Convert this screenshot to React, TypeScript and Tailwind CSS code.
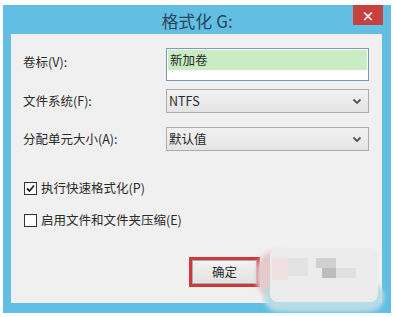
import React from "react";

const font = { fontFamily: '"Noto Sans CJK SC", "Noto Sans", sans-serif' };

function Chevron() {
  return (
    <svg width="10" height="7" viewBox="0 0 10 7" className="mr-[6px]">
      <path d="M1.5 1.5 L5 5 L8.5 1.5" fill="none" stroke="#555" strokeWidth="1.8" />
    </svg>
  );
}

export default function App() {
  return (
    <div className="w-[395px] h-[317px] bg-white overflow-hidden" style={font}>
      <div className="ml-[3px] mt-[5px] w-[388px] h-[308px] bg-[#62bfe3] flex flex-col relative">
        {/* title bar */}
        <div className="h-[29px] flex items-center justify-center relative">
          <span className="text-[17px] text-[#26465a] leading-none mt-[1px]">格式化 G:</span>
          <div className="absolute right-[8px] top-0 w-[30px] h-[20px] bg-[#c7413f] flex items-center justify-center">
            <span className="text-white text-[13px] font-bold leading-none">×</span>
          </div>
        </div>
        {/* content panel */}
        <div className="ml-[8px] w-[371px] h-[269px] bg-[#f0f0f0] relative text-[12.5px] text-[#2a2a2a] leading-[14px]">
          <div className="flex flex-col pt-[14px] pl-[12px]">
            <div className="flex items-start">
              <span className="w-[143px] mt-[7px]">卷标(V):</span>
              <div className="w-[203px] h-[33px] border border-[#7c9ab4] bg-white flex flex-col">
                <div className="h-[20px] bg-[#c9ecc2] m-[1px] mb-0 flex items-center pl-[2px]">新加卷</div>
              </div>
            </div>
            <div className="flex items-center mt-[8px]">
              <span className="w-[143px]">文件系统(F):</span>
              <div className="w-[203px] h-[24px] border border-[#acacac] bg-gradient-to-b from-[#f2f2f2] to-[#e4e4e4] flex items-center justify-between pl-[2px]">
                <span>NTFS</span>
                <Chevron />
              </div>
            </div>
            <div className="flex items-center mt-[14px]">
              <span className="w-[143px]">分配单元大小(A):</span>
              <div className="w-[203px] h-[24px] border border-[#acacac] bg-gradient-to-b from-[#f2f2f2] to-[#e4e4e4] flex items-center justify-between pl-[2px]">
                <span>默认值</span>
                <Chevron />
              </div>
            </div>
            <div className="flex items-center h-[20px] mt-[27px] pl-[1px]">
              <div className="w-[13px] h-[13px] border border-[#333] bg-white flex items-center justify-center mr-[4px]">
                <svg width="11" height="11" viewBox="0 0 11 11">
                  <path d="M2 5.5 L4.5 8 L9 2.5" fill="none" stroke="#222" strokeWidth="1.8" />
                </svg>
              </div>
              <span>执行快速格式化(P)</span>
            </div>
            <div className="flex items-center h-[20px] mt-[12px] pl-[1px]">
              <div className="w-[13px] h-[13px] border border-[#333] bg-white mr-[4px]" />
              <span>启用文件和文件夹压缩(E)</span>
            </div>
          </div>
          {/* OK button with red annotation */}
          <div className="absolute left-[178px] top-[223px] w-[71px] h-[30px] border-[3px] border-[#d2363a] flex">
            <div className="flex-1 border border-[#adadad] bg-gradient-to-b from-[#f2f2f2] to-[#e2e2e2] flex items-center justify-center">
              <span className="text-[12.5px]">确定</span>
            </div>
          </div>
          {/* mosaic blur */}
          <div className="absolute left-[245px] top-[212px] w-[130px] h-[64px]">
            <div className="absolute left-[0px] top-[4px] w-[44px] h-[50px] rounded-full bg-[#e6c9cc] blur-[2px]" />
            <div className="absolute left-[8px] top-[36px] w-[120px] h-[30px] rounded-[15px] bg-[#b8dbe6] blur-[2px]" />
            <div className="absolute left-[14px] top-[2px] w-[108px] h-[54px] bg-[#ececec] rounded-[8px]" />
            <div className="absolute left-[16px] top-[12px] w-[16px] h-[22px] bg-[#efdfe0]" />
            <div className="absolute left-[32px] top-[12px] w-[20px] h-[18px] bg-[#e3e3e3]" />
            <div className="absolute left-[60px] top-[12px] w-[20px] h-[10px] bg-[#d0d0d0]" />
            <div className="absolute left-[66px] top-[22px] w-[14px] h-[10px] bg-[#bdbdbd]" />
            <div className="absolute left-[80px] top-[22px] w-[20px] h-[10px] bg-[#e0e0e0]" />
          </div>
        </div>
      </div>
    </div>
  );
}
